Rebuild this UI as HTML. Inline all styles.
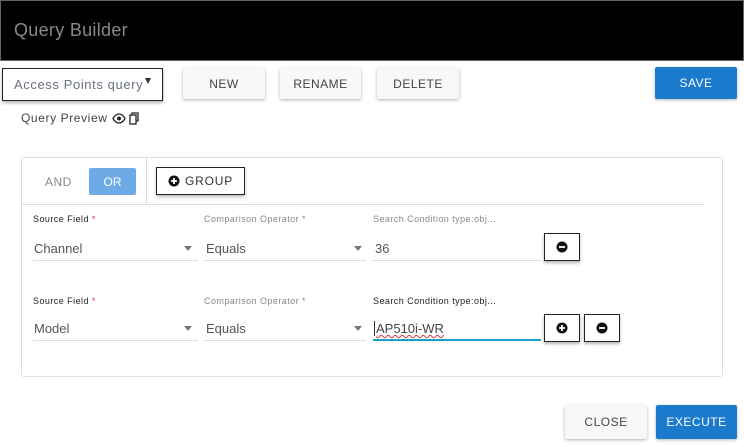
<!DOCTYPE html>
<html><head><meta charset="utf-8"><style>
*{box-sizing:border-box;margin:0;padding:0}
body{width:744px;height:447px;background:#fff;font-family:"Liberation Sans",sans-serif;position:relative;overflow:hidden}
.a{position:absolute}
.btn{position:absolute;background:#f8f8f8;box-shadow:0 1px 3px rgba(0,0,0,.3);border-radius:2px;font-size:12px;color:#444;display:flex;align-items:center;justify-content:center;letter-spacing:.5px}
.blue{background:#1b7acb;color:#fff}
.lbl{position:absolute;font-size:9px;color:#222;letter-spacing:.45px}
.lbl.g{color:#888}
.val{position:absolute;font-size:13px;color:#555}
.ul{position:absolute;height:1px;background:#ddd}
.ib{position:absolute;width:36px;height:28px;border:1.5px solid #222;background:#fff;box-shadow:0 2px 3px rgba(0,0,0,.3);display:flex;align-items:center;justify-content:center}
.car{position:absolute;width:0;height:0;border-left:4px solid transparent;border-right:4px solid transparent;border-top:5px solid #777}
</style></head><body>
<div class="a" style="left:0;top:0;width:744px;height:61px;background:#000;border:1px solid #666"></div>
<div class="a" style="left:14px;top:20px;font-size:18px;color:#888;letter-spacing:.3px">Query Builder</div>

<div class="a" style="left:2px;top:68px;width:161px;height:33px;border:1.5px solid #222;box-shadow:0 2px 3px rgba(0,0,0,.3)"></div>
<div class="a" style="left:14px;top:77px;font-size:13px;color:#6a7080;letter-spacing:.6px">Access Points query</div>
<div class="a" style="left:145px;top:78px;width:0;height:0;border-left:3.5px solid transparent;border-right:3.5px solid transparent;border-top:6px solid #333"></div>

<div class="btn" style="left:183px;top:68px;width:82px;height:31px">NEW</div>
<div class="btn" style="left:280px;top:68px;width:81px;height:31px">RENAME</div>
<div class="btn" style="left:377px;top:68px;width:82px;height:31px">DELETE</div>
<div class="btn blue" style="left:655px;top:67px;width:82px;height:32px">SAVE</div>

<div class="a" style="left:21px;top:111px;font-size:12px;color:#444;letter-spacing:.6px">Query Preview</div>
<svg class="a" style="left:112px;top:112px" width="30" height="13" viewBox="0 0 30 13"><path d="M1 6.5C3 3 5 2 7 2s4 1 6 4.5C11 10 9 11 7 11S3 10 1 6.5z" fill="none" stroke="#222" stroke-width="1.3"/><circle cx="7" cy="6.5" r="2" fill="#222"/><rect x="18" y="3" width="6" height="9" fill="none" stroke="#222" stroke-width="1.3"/><path d="M20 3V1h6v8h-2" fill="none" stroke="#222" stroke-width="1.3"/></svg>

<div class="a" style="left:21px;top:157px;width:702px;height:220px;border:1px solid #ddd;border-radius:3px"></div>
<div class="a" style="left:146px;top:158px;width:1px;height:47px;background:#ddd"></div>
<div class="a" style="left:21px;top:204px;width:683px;height:1px;background:#ddd"></div>
<div class="a" style="left:45px;top:175px;font-size:12px;color:#888;letter-spacing:.5px">AND</div>
<div class="a" style="left:89px;top:168px;width:47px;height:27px;background:#6eaae6;border-radius:2px;color:#fff;font-size:12px;display:flex;align-items:center;justify-content:center">OR</div>
<div class="a" style="left:156px;top:167px;width:89px;height:28px;border:1.5px solid #222;box-shadow:0 2px 3px rgba(0,0,0,.25);display:flex;align-items:center;padding-left:11px;font-size:12px;color:#333;letter-spacing:.8px">
<svg width="12" height="12" viewBox="0 0 12 12" style="margin-right:5px"><circle cx="6" cy="6" r="5.5" fill="#111"/><path d="M6 3v6M3 6h6" stroke="#fff" stroke-width="1.8"/></svg>GROUP</div>

<div class="lbl" style="left:33px;top:214px">Source Field <span style="color:#d33">*</span></div>
<div class="lbl g" style="left:204px;top:214px">Comparison Operator *</div>
<div class="lbl g" style="left:373px;top:214px">Search Condition type:obj...</div>
<div class="val" style="left:34px;top:241px">Channel</div>
<div class="car" style="left:184px;top:246px"></div>
<div class="ul" style="left:33px;top:260px;width:165px"></div>
<div class="val" style="left:206px;top:241px">Equals</div>
<div class="car" style="left:354px;top:246px"></div>
<div class="ul" style="left:204px;top:260px;width:162px"></div>
<div class="val" style="left:375px;top:241px">36</div>
<div class="ul" style="left:373px;top:260px;width:168px"></div>
<div class="ib" style="left:544px;top:233px"><svg width="12" height="12" viewBox="0 0 12 12"><circle cx="6" cy="6" r="5.5" fill="#111"/><path d="M3 6h6" stroke="#fff" stroke-width="1.8"/></svg></div>

<div class="lbl" style="left:33px;top:296px">Source Field <span style="color:#d33">*</span></div>
<div class="lbl g" style="left:204px;top:296px">Comparison Operator *</div>
<div class="lbl" style="left:373px;top:296px">Search Condition type:obj...</div>
<div class="val" style="left:34px;top:321px">Model</div>
<div class="car" style="left:184px;top:326px"></div>
<div class="ul" style="left:33px;top:340px;width:165px"></div>
<div class="val" style="left:206px;top:321px">Equals</div>
<div class="car" style="left:354px;top:326px"></div>
<div class="ul" style="left:204px;top:340px;width:162px"></div>
<div class="val" style="left:374px;top:321px;color:#444;border-left:1px solid #333;padding-left:1px;text-decoration:underline wavy #d33;text-decoration-thickness:1px">AP510i-WR</div>
<div class="a" style="left:373px;top:339px;width:168px;height:2px;background:#1aa0c8"></div>
<div class="ib" style="left:544px;top:314px"><svg width="12" height="12" viewBox="0 0 12 12"><circle cx="6" cy="6" r="5.5" fill="#111"/><path d="M6 3v6M3 6h6" stroke="#fff" stroke-width="1.8"/></svg></div>
<div class="ib" style="left:584px;top:314px"><svg width="12" height="12" viewBox="0 0 12 12"><circle cx="6" cy="6" r="5.5" fill="#111"/><path d="M3 6h6" stroke="#fff" stroke-width="1.8"/></svg></div>

<div class="btn" style="left:565px;top:405px;width:82px;height:34px">CLOSE</div>
<div class="btn blue" style="left:656px;top:405px;width:81px;height:34px">EXECUTE</div>
</body></html>
